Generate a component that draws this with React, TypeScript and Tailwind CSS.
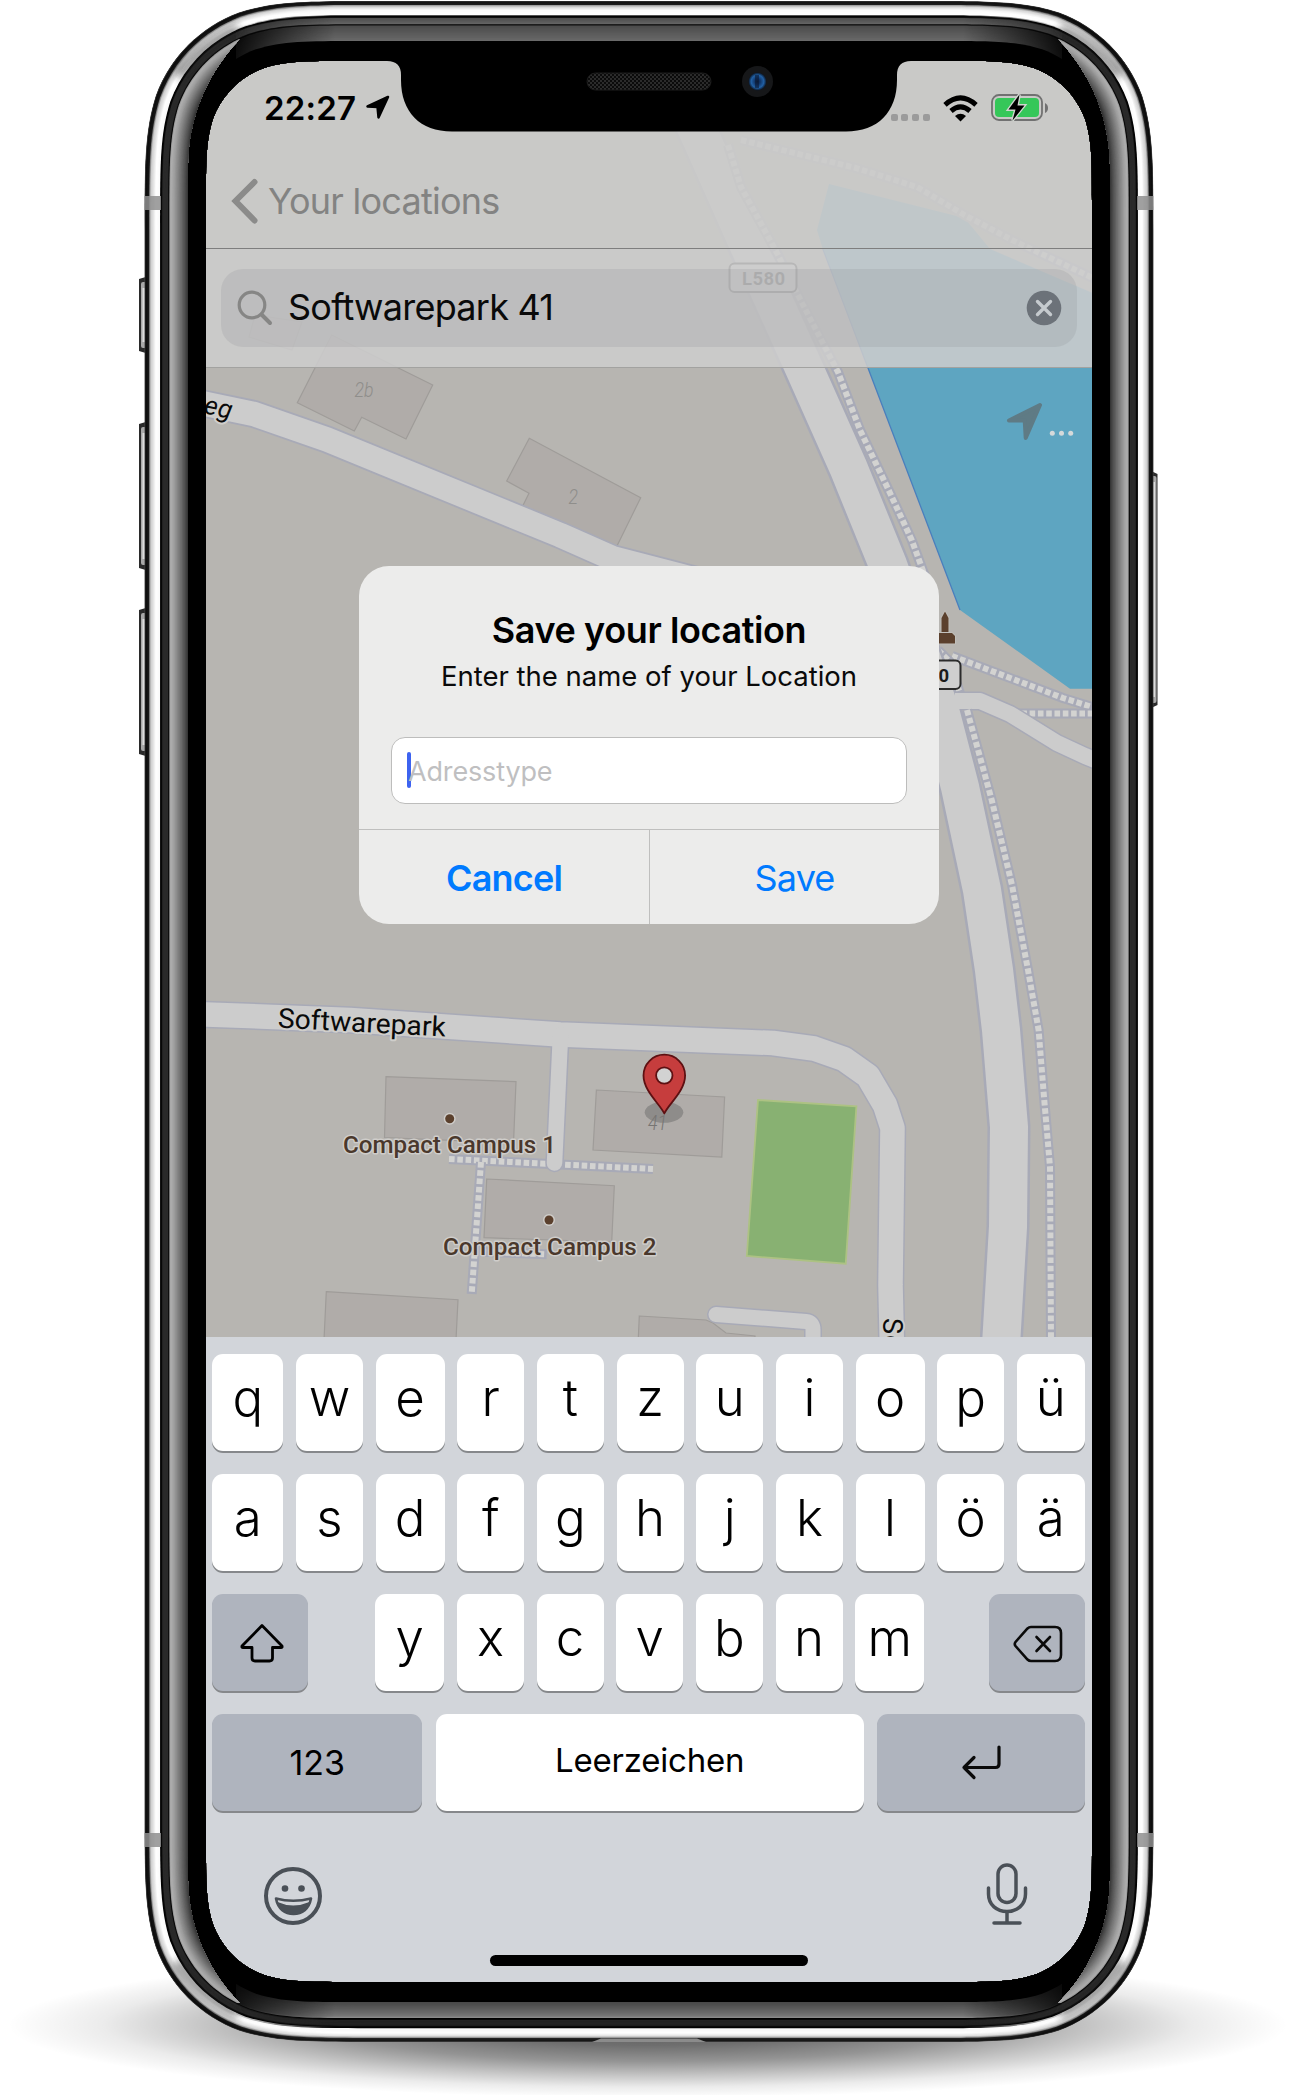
import React from "react";

/* ---------- geometry helpers for the device frame ---------- */

const OUT = { x0: 144.5, y0: 1, x1: 1153.5, y1: 2042 };

// Rounded rectangle with continuous-curvature corners.
function smoothRect(x0: number, y0: number, x1: number, y1: number, r: number): string {
  const a = 1.52866 * r, b = 1.08849 * r, c = 0.86841 * r, d = 0.63149 * r;
  const e = 0.37282 * r, f = 0.16906 * r, g = 0.07491 * r;
  return [
    `M${x0 + a},${y0} L${x1 - a},${y0}`,
    `C${x1 - b},${y0} ${x1 - c},${y0} ${x1 - d},${y0 + g}`,
    `C${x1 - e},${y0 + f} ${x1 - f},${y0 + e} ${x1 - g},${y0 + d}`,
    `C${x1},${y0 + c} ${x1},${y0 + b} ${x1},${y0 + a}`,
    `L${x1},${y1 - a}`,
    `C${x1},${y1 - b} ${x1},${y1 - c} ${x1 - g},${y1 - d}`,
    `C${x1 - f},${y1 - e} ${x1 - e},${y1 - f} ${x1 - d},${y1 - g}`,
    `C${x1 - c},${y1} ${x1 - b},${y1} ${x1 - a},${y1}`,
    `L${x0 + a},${y1}`,
    `C${x0 + b},${y1} ${x0 + c},${y1} ${x0 + d},${y1 - g}`,
    `C${x0 + e},${y1 - f} ${x0 + f},${y1 - e} ${x0 + g},${y1 - d}`,
    `C${x0},${y1 - c} ${x0},${y1 - b} ${x0},${y1 - a}`,
    `L${x0},${y0 + a}`,
    `C${x0},${y0 + b} ${x0},${y0 + c} ${x0 + g},${y0 + d}`,
    `C${x0 + f},${y0 + e} ${x0 + e},${y0 + f} ${x0 + d},${y0 + g}`,
    `C${x0 + c},${y0} ${x0 + b},${y0} ${x0 + a},${y0}Z`,
  ].join(" ");
}

const ring = (d: number) =>
  smoothRect(OUT.x0 + d, OUT.y0 + d * 0.976, OUT.x1 - d, OUT.y1 - d * 0.976, 150 - d * 0.94);

const SCREEN = smoothRect(206, 61, 1092, 1982, 92);

// [inset from the outer edge, grey level]
type Stop = [number, number];

const SIDE_BAND: Stop[] = [
  [0, 70], [1, 12], [4, 24], [4.6, 120], [6, 205], [9, 232], [11, 255], [15, 250],
  [15.6, 0], [17, 8], [18, 42], [23, 42], [24, 4], [24.8, 0],
];
const TOP_BAND: Stop[] = [
  [0, 50], [1, 20], [3.4, 30], [4, 150], [6, 215], [9, 250], [14, 255], [14.6, 60],
  [15.2, 0], [17, 20], [17.4, 78], [23, 100], [23.8, 10], [25, 30], [25.2, 0],
];
const BOTTOM_BAND: Stop[] = [
  [0, 60], [1, 20], [3.6, 40], [4.2, 150], [6, 225], [9, 255], [13.6, 245], [14.2, 0],
  [16, 10], [17, 34], [22, 34], [23, 0], [24.6, 0],
];
const SIDE_GLASS: Stop[] = [[24.8, 150], [26, 175], [29, 160], [35, 118], [40, 80], [44, 44]];
const TOP_GLASS: Stop[] = [[25.2, 76], [40, 104], [41, 110]];
const BOTTOM_GLASS: Stop[] = [[24.6, 140], [26, 120], [34, 92], [41, 70]];

function Bands({ stops }: { stops: Stop[] }) {
  const out: React.ReactNode[] = [];
  for (let i = 0; i < stops.length - 1; i++) {
    const [d0, c0] = stops[i];
    const [d1, c1] = stops[i + 1];
    const n = Math.max(1, Math.round((d1 - d0) / 0.6));
    for (let k = 0; k < n; k++) {
      const t = k / n;
      const v = Math.round(c0 + (c1 - c0) * t);
      out.push(<path key={`${i}-${k}`} d={ring(d0 + (d1 - d0) * t)} fill={`rgb(${v},${v},${v})`} />);
    }
  }
  const end = stops[stops.length - 1][0];
  return (
    <>
      {out}
      <path d={ring(end)} fill="#000" />
    </>
  );
}

function SideButton({ y, h, right }: { y: number; h: number; right?: boolean }) {
  const x = right ? 1149 : 139;
  return (
    <g>
      <path
        d={
          right
            ? `M1149 ${y}L1157.5 ${y + 4}V${y + h - 4}L1149 ${y + h}Z`
            : `M149 ${y}L139 ${y + 3}V${y + h - 3}L149 ${y + h}Z`
        }
        fill="#2a2a2a"
      />
      <rect x={x + 2} y={y + 6} width="5.5" height={h - 12} rx="2" fill="#a8a8a8" />
      <rect x={x + 3.5} y={y + 12} width="2.5" height={h - 24} fill="#dcdcdc" />
    </g>
  );
}

function DeviceFrame() {
  return (
    <svg className="pointer-events-none absolute inset-0" width="1296" height="2095" viewBox="0 0 1296 2095">
      <defs>
        <clipPath id="bezel">
          <path clipRule="evenodd" d={`${ring(0)} ${SCREEN}`} />
        </clipPath>
        <clipPath id="sides">
          <path d="M100 39H240C214 66 189 108 188 165V1880C189 1935 214 1978 240 2003H100Z" />
          <path d="M1198 39H1058C1084 66 1109 108 1110 165V1880C1109 1935 1084 1978 1058 2003H1198Z" />
        </clipPath>
        <linearGradient id="fadeX" gradientUnits="userSpaceOnUse" x1="236" y1="0" x2="1062" y2="0">
          <stop offset="0" stopColor="#222" />
          <stop offset="0.12" stopColor="#fff" />
          <stop offset="0.88" stopColor="#fff" />
          <stop offset="1" stopColor="#222" />
        </linearGradient>
        <mask id="topMask" maskUnits="userSpaceOnUse" x="0" y="0" width="1296" height="2095">
          <rect x="236" y="0" width="826" height="80" fill="url(#fadeX)" />
        </mask>
        <mask id="bottomMask" maskUnits="userSpaceOnUse" x="0" y="0" width="1296" height="2095">
          <rect x="236" y="1970" width="826" height="80" fill="url(#fadeX)" />
        </mask>
        <pattern id="mesh" width="4" height="4" patternUnits="userSpaceOnUse">
          <rect width="4" height="4" fill="#0b0b0b" />
          <rect width="2" height="2" fill="#2b2b2b" />
          <rect x="2" y="2" width="2" height="2" fill="#2b2b2b" />
        </pattern>
        <radialGradient id="lens">
          <stop offset="0" stopColor="#0c2140" />
          <stop offset="0.35" stopColor="#123a70" />
          <stop offset="0.7" stopColor="#2160a4" />
          <stop offset="1" stopColor="#0a1526" />
        </radialGradient>
        <filter id="soft" x="-50%" y="-50%" width="200%" height="200%">
          <feGaussianBlur stdDeviation="4" />
        </filter>
      </defs>

      <SideButton y={276} h={78} />
      <SideButton y={421} h={150} />
      <SideButton y={607} h={150} />
      <SideButton y={470} h={239} right />

      <g clipPath="url(#bezel)">
        <Bands stops={SIDE_BAND} />
        <g mask="url(#topMask)">
          <Bands stops={[...TOP_BAND, ...TOP_GLASS]} />
        </g>
        <g mask="url(#bottomMask)">
          <Bands stops={[...BOTTOM_BAND, ...BOTTOM_GLASS]} />
        </g>
        <g clipPath="url(#sides)">
          <Bands stops={[...SIDE_BAND, ...SIDE_GLASS]} />
        </g>
        {/* reflections on the steel band at the corners */}
        <g filter="url(#soft)" opacity="0.6" fill="none" stroke="#222" strokeWidth="8">
          <path d="M178 76Q202 44 238 29" />
          <path d="M1120 76Q1096 44 1060 29" />
          <path d="M176 1962Q200 1998 238 2014" />
          <path d="M1122 1962Q1098 1998 1060 2014" />
        </g>
        <g fill="#8f8f8f" opacity="0.85">
          <rect x="144" y="196" width="17" height="14" />
          <rect x="1137" y="196" width="17" height="14" />
          <rect x="144" y="1833" width="17" height="14" />
          <rect x="1137" y="1833" width="17" height="14" />
        </g>
      </g>

      <path
        d="M380 58V61H387Q401 61 401 75V80C401 112 420 131.500 452 131.500H846C878 131.500 897 112 897 80V75Q897 61 911 61H920V58Z"
        fill="#000"
      />
      <path d="M592 2042L601 2038.500H697L706 2042Z" fill="#8b8b8b" />
      <rect x="587" y="73" width="124" height="17" rx="8.500" fill="url(#mesh)" stroke="#1c1c1c" />
      <circle cx="757.500" cy="81.500" r="15.500" fill="#161719" />
      <circle cx="757.500" cy="81.500" r="9" fill="url(#lens)" />
      <rect x="755" y="75" width="4" height="13" fill="#0b1830" opacity="0.6" />
    </svg>
  );
}

/* ---------- map ---------- */

const CASING = "#a8aab7";
const ROAD = "#cccccc";

function Road({ d, w, cap = "butt" }: { d: string; w: number; cap?: "butt" | "round" }) {
  return <path d={d} fill="none" stroke={ROAD} strokeWidth={w} strokeLinejoin="round" strokeLinecap={cap} />;
}
function RoadCasing({ d, w, cap = "butt" }: { d: string; w: number; cap?: "butt" | "round" }) {
  return <path d={d} fill="none" stroke={CASING} strokeWidth={w} strokeLinejoin="round" strokeLinecap={cap} />;
}
function FootPath({ d, w = 6 }: { d: string; w?: number }) {
  return (
    <g fill="none" strokeLinejoin="round">
      <path d={d} stroke={CASING} strokeWidth={w + 4} />
      <path d={d} stroke="#d3d3d1" strokeWidth={w} strokeDasharray="5.600 2.700" />
    </g>
  );
}

const WEG = "M196 402L254 414L327 439.500L560 535L612 558L720 586";
const PARK =
  "M196 1014L350 1020L560 1034.500L773 1043L814 1048.500L844 1059L868 1076L885 1105L892.500 1128L890.500 1285L892 1350";
const LANE = "M560.500 1035L554.500 1163";
const STUB = "M716 1314.500L806 1321.500Q813 1322 813 1330V1350";
const MAIN =
  "M672 75L702 140L750 248L804 368L848 466.700L888 565L940 710L960 787L982 890L994 970L1001 1030L1009 1127L1008 1227L1001 1345";
const SHORE = "M955 701L980 701L1010 714L1057 743L1085 756L1100 762";

function Shield({ x, y, stroke = "#2b2b2b" }: { x: number; y: number; stroke?: string }) {
  return (
    <g>
      <rect x={x} y={y} width="67" height="28.500" rx="5" fill="#cfcfcf" stroke={stroke} strokeWidth="2" />
      <text x={x + 12.500} y={y + 21.500} fontFamily="Roboto" fontWeight="700" fontSize="18.500" textLength="43" fill="#1b1b1b">
        L580
      </text>
    </g>
  );
}

function MapView() {
  const building = { fill: "#b0aca9", stroke: "#9f9c99", strokeWidth: 1.2 };
  return (
    <svg className="absolute left-0 top-0" width="886" height="1276" viewBox="206 61 886 1276" fontFamily="Roboto">
      <rect x="206" y="61" width="886" height="1276" fill="#b7b5b1" />
      <g {...building}>
        <path d="M297.300 402.700L354.300 431L361.700 417.300L406 439L432.700 385L331.700 335Z" />
        <path d="M255 315L249 337L292 350L302 322Z" />
        <path d="M529.300 438.300L506.700 481L529 493.300L522.700 506L615 550L640.700 497.700Z" />
        <path d="M386 1076.700L516 1081.700L513.500 1143L384.500 1137.500Z" />
        <path d="M596.400 1090L724.600 1097L721.800 1157L593 1150Z" />
        <path d="M486.700 1179L614.300 1185.700L611.700 1242L484 1237.700Z" />
        <path d="M326.300 1291.700L458 1299.700L456 1340L324 1340Z" />
        <path d="M639.300 1316L706 1320L713 1323L726 1333L755 1336V1345H638Z" />
      </g>
      <path d="M758 1100L856.400 1106.300L845.700 1263.700L746.800 1256Z" fill="#88b172" stroke="#adc283" strokeWidth="1.800" />
      <path
        d="M829 184L964.500 218L990 249L1095 294V688.700H1070L960 610L868 368L822.500 248L817 230Z"
        fill="#5ea5c1"
      />
      <path d="M822.500 248L868 368L960 610" fill="none" stroke="#4a7fbd" strokeWidth="1.300" />

      <FootPath d="M480.500 1251.700L546.700 1254.300" />
      <FootPath d="M449 1159L653 1169" />
      <FootPath d="M481 1162L471.700 1294" />
      <FootPath d="M741 140L856 168L917 187L964.500 215L1012 240L1095 279" />
      <FootPath d="M952 656L1063 698L1095 708" />
      <FootPath d="M1013 713.500H1095" />
      <FootPath d="M938 650L950 662L962 700" />

      <RoadCasing d={WEG} w={28} />
      <RoadCasing d={MAIN} w={43} />
      <RoadCasing d={PARK} w={27.5} />
      <RoadCasing d={LANE} w={18.5} cap="round" />
      <RoadCasing d={STUB} w={18} cap="round" />
      <RoadCasing d={SHORE} w={19} />
      <Road d={WEG} w={24.5} />
      <Road d={MAIN} w={38} />
      <Road d={PARK} w={24.5} />
      <Road d={LANE} w={15.5} cap="round" />
      <Road d={STUB} w={15} cap="round" />
      <Road d={SHORE} w={16} />
      <FootPath d="M728 145L741 187L777 253L802 303L838 372L860 430L890 493L911.700 540L930 590" />
      <FootPath d="M967 710L980 757L991.700 800L1012 885L1028 970L1038.600 1030L1044 1097L1050 1167L1051 1340" />

      <Shield x={729.500} y={263.500} />
      <Shield x={893.500} y={660.500} />

      <g fill="#5b402d" stroke="#c4c2be" strokeWidth="1.500" paintOrder="stroke">
        <path d="M945 611.500L948.500 618V632H941.500V618Z" />
        <path d="M936 633H952L955 636V643.500H933V636Z" />
      </g>

      <g fontStyle="italic" fill="#8f8e8b" fontSize="20" fontWeight="300">
        <text x="354.500" y="396.500" textLength="19" lengthAdjust="spacingAndGlyphs">2b</text>
        <text x="568.500" y="504" textLength="9.500" lengthAdjust="spacingAndGlyphs">2</text>
      </g>

      <g stroke="#cfcecb" strokeWidth="4" paintOrder="stroke" strokeLinejoin="round" fill="#0a0a0a">
        <text transform="translate(203 413) rotate(12)" fontSize="26" textLength="28" fontStyle="italic">eg</text>
        <text transform="translate(277.500 1027.500) rotate(3.100)" fontSize="27.500" textLength="168" lengthAdjust="spacingAndGlyphs">Softwarepark</text>
        <text transform="translate(883 1318) rotate(90)" fontSize="27" letterSpacing="1">So</text>
      </g>
      <g stroke="#cfcdca" strokeWidth="3" paintOrder="stroke" strokeLinejoin="round" fill="#4a382c" fontSize="24.500" fontWeight="500">
        <circle cx="449.700" cy="1118.700" r="4.500" fill="#5b402d" />
        <circle cx="549" cy="1220" r="4.500" fill="#5b402d" />
        <text x="343" y="1153.300" textLength="213" lengthAdjust="spacingAndGlyphs">Compact Campus 1</text>
        <text x="443" y="1254.500" textLength="213.500" lengthAdjust="spacingAndGlyphs">Compact Campus 2</text>
      </g>

      <ellipse cx="664" cy="1112.300" rx="19.300" ry="10.500" fill="#8e8c8a" />
      <text x="648" y="1130" fontStyle="italic" fontSize="20" fontWeight="300" fill="#777573" textLength="19" lengthAdjust="spacingAndGlyphs">41</text>
      <path
        d="M664.300 1113.500C660 1104 643.500 1091 643.500 1075.500A20.800 20.800 0 0 1 685.100 1075.500C685.100 1091 668.500 1104 664.300 1113.500Z"
        fill="#c63d3d"
        stroke="#5e1012"
        strokeWidth="1.800"
        strokeLinejoin="round"
      />
      <circle cx="664.300" cy="1075.500" r="8.200" fill="#d2d2d2" stroke="#5e1012" strokeWidth="1.800" />

      <path
        d="M1040 405L1009 420.500H1024.700L1025.700 438Z"
        fill="#5f7b85"
        stroke="#5f7b85"
        strokeWidth="4"
        strokeLinejoin="round"
      />
      <g fill="#d5d9da">
        <circle cx="1052.300" cy="433.300" r="2.500" />
        <circle cx="1061.500" cy="433.300" r="2.500" />
        <circle cx="1070.700" cy="433.300" r="2.500" />
      </g>
    </svg>
  );
}

/* ---------- bars ---------- */

function StatusBar() {
  return (
    <div className="flex h-[92px] items-start justify-between pl-[58px] pr-[43px] pt-[27px]">
      <div className="flex items-center gap-[10px]">
        <span className="w-[91px] whitespace-nowrap text-[33px] font-semibold leading-[40px] tracking-[0.200px] text-black">22:27</span>
        <svg width="25" height="25" viewBox="0 0 25 25" className="mt-[-1px]">
          <path d="M23 2L2.500 11.500L12.500 12L13.500 22.500Z" fill="#000" stroke="#000" strokeWidth="2.500" strokeLinejoin="round" />
        </svg>
      </div>
      <div className="mt-[5px] flex items-end gap-[13px]">
        <div className="mb-[1px] flex gap-[3.800px]">
          {[0, 1, 2, 3].map((i) => (
            <div key={i} className="h-[7px] w-[7px] rounded-[2px] bg-[#9b9b9b]" />
          ))}
        </div>
        <svg width="35" height="27" viewBox="0 0 35 27">
          <g fill="none" stroke="#000" strokeWidth="5">
            <path d="M2 9.800Q17.500 -4 33 9.800" />
            <path d="M8 16Q17.500 7.800 27 16" />
          </g>
          <path d="M17.500 26.500L12 21Q17.500 16.500 23 21Z" />
        </svg>
        <svg width="58" height="30" viewBox="0 0 58 30" className="mb-[-1px]">
          <rect x="1" y="2" width="50" height="25" rx="7" fill="none" stroke="#717171" strokeWidth="1.800" />
          <rect x="4" y="5" width="44" height="19" rx="4" fill="#35c759" />
          <path d="M54 10V20Q57 18.500 57 15T54 10Z" fill="#717171" />
          <path d="M28.500 1.500L17.500 16.500H24.500L21.500 27.500L33.500 12.500H26.500Z" fill="#000" stroke="#cfd6cf" strokeWidth="2.800" paintOrder="stroke" />
        </svg>
      </div>
    </div>
  );
}

function Header() {
  return (
    <header className="relative h-[188px] border-b-[1.500px] border-[#7e7e7e] bg-[rgba(203,203,202,0.9)]">
      <StatusBar />
      <div className="flex h-[95px] items-center pl-[25px]">
        <svg width="28" height="48" viewBox="0 0 28 48">
          <path d="M23.500 5L4.500 24L23.500 43.500" fill="none" stroke="#8b8b8a" strokeWidth="6" strokeLinecap="round" strokeLinejoin="miter" />
        </svg>
        <span className="ml-[9px] whitespace-nowrap text-[36px] leading-[44px] tracking-[-0.750px] text-[#838382]">Your locations</span>
      </div>
    </header>
  );
}

function SearchBar() {
  return (
    <div className="relative h-[119px] border-b-[1.500px] border-[#a2a2a0] bg-[rgba(204,204,204,0.87)] px-[15px] pt-[20px]">
      <div className="flex h-[78px] items-center rounded-[22px] bg-[rgba(110,110,115,0.13)] pl-[16px] pr-[15px]">
        <svg width="36" height="36" viewBox="0 0 36 36" className="mt-[-1px]">
          <circle cx="15" cy="15" r="12.800" fill="none" stroke="#868685" strokeWidth="3.200" />
          <path d="M24.500 24.500L33 33" stroke="#868685" strokeWidth="4" strokeLinecap="round" />
        </svg>
        <span className="ml-[15px] mt-[-2px] whitespace-nowrap text-[36px] leading-[44px] tracking-[-0.750px] text-[#0a0a0a]">Softwarepark 41</span>
        <svg width="36" height="36" viewBox="0 0 36 36" className="ml-auto">
          <circle cx="18" cy="18" r="17.300" fill="#6c7279" />
          <path d="M11.500 11.500L24.500 24.500M24.500 11.500L11.500 24.500" stroke="#c5cace" strokeWidth="3.400" strokeLinecap="round" />
        </svg>
      </div>
    </div>
  );
}

/* ---------- dialog ---------- */

function SaveDialog() {
  return (
    <div className="absolute left-[153px] top-[504.500px] flex h-[358px] w-[580px] flex-col overflow-hidden rounded-[30px] bg-[#ececeb] pt-[44px]">
      <h1 className="whitespace-nowrap text-center text-[36px] font-semibold leading-[40px] tracking-[-0.400px] text-black">Save your location</h1>
      <p className="mt-[8px] whitespace-nowrap text-center text-[27.500px] leading-[36px] text-[#0a0a0a]">Enter the name of your Location</p>
      <div className="mx-[32px] mt-[43px] flex h-[67px] items-center rounded-[14px] border-[1.500px] border-[#bdbdbc] bg-white pl-[15px]">
        <div className="h-[36px] w-[4px] rounded-[2px] bg-[#3d63f0]" />
        <span className="ml-[-3px] mt-[3px] text-[27px] leading-[36px] tracking-[-0.150px] text-[#bfbfc1]">Adresstype</span>
      </div>
      <div className="mt-[25px] grid flex-1 grid-cols-[291px_1fr] border-t-[1.500px] border-[#bfbfbe] text-[36px] text-[#007aff]">
        <button className="border-r-[1.500px] border-[#bfbfbe] pt-[3px] font-semibold tracking-[-0.800px]">Cancel</button>
        <button className="pt-[3px] tracking-[-0.850px]">Save</button>
      </div>
    </div>
  );
}

/* ---------- keyboard ---------- */

const KEY = "h-[97px] rounded-[11px] bg-white shadow-[0_2px_0_#86888b]";
const LETTER = `${KEY} text-center text-[51px] font-[350] leading-[87px] text-black`;
const DARK = "h-[97px] rounded-[11px] bg-[#afb4be] shadow-[0_2px_0_#86888b] flex items-center justify-center";

const WIDTHS = ["w-[71px]", "w-[67px]", "w-[69px]", "w-[67px]", "w-[67px]", "w-[67px]", "w-[67px]", "w-[67px]", "w-[69px]", "w-[67px]", "w-[68px]"];

function KeyRow({ letters }: { letters: string }) {
  return (
    <div className="flex justify-between">
      {[...letters].map((ch, i) => (
        <div key={ch} className={`${LETTER} ${WIDTHS[i]}`}>{ch}</div>
      ))}
    </div>
  );
}

function Keyboard() {
  return (
    <div className="relative h-[645px] bg-[#d2d5da] pl-[6.300px] pr-[7px] pt-[17px]">
      <div className="flex flex-col gap-[23px]">
        <KeyRow letters="qwertzuiopü" />
        <KeyRow letters="asdfghjklöä" />
        <div className="flex">
          <div className={`${DARK} w-[96px]`}>
            <svg width="46" height="42" viewBox="0 0 46 42" className="ml-[3px] mt-[1px]">
              <path
                d="M23 3.500L43 24Q43.500 25.500 42 25.500H33.500V36Q33.500 39 30.500 39H16Q13 39 13 36V25.500H4Q2.500 25.500 3 24Z"
                fill="none" stroke="#000" strokeWidth="2.800" strokeLinejoin="round"
              />
            </svg>
          </div>
          <div className="ml-[67px] flex w-[549px] justify-between">
            {[..."yxcvbnm"].map((ch, i) => (
              <div key={ch} className={`${LETTER} ${WIDTHS[i + 2]}`}>{ch}</div>
            ))}
          </div>
          <div className={`${DARK} ml-auto w-[96px]`}>
            <svg width="52" height="40" viewBox="0 0 52 40" className="ml-[1px] mt-[2px]">
              <path
                d="M19 3H43Q49 3 49 9V31Q49 37 43 37H19Q17 37 15.500 35.500L3.500 22Q2 20 3.500 18L15.500 4.500Q17 3 19 3Z"
                fill="none" stroke="#0a0a0a" strokeWidth="2.600"
              />
              <path d="M24.500 13L38 27M38 13L24.500 27" stroke="#0a0a0a" strokeWidth="2.600" strokeLinecap="round" />
            </svg>
          </div>
        </div>
        <div className="flex justify-between">
          <div className={`${DARK} w-[210px] text-[34px] text-black`}>123</div>
          <div className={`${KEY} w-[428px] text-center text-[33px] leading-[92px] tracking-[-0.200px] text-black`}>Leerzeichen</div>
          <div className={`${DARK} w-[208px]`}>
            <svg width="42" height="36" viewBox="0 0 42 36" className="mt-[-2px]">
              <path d="M39 3V20Q39 23.500 35.500 23.500H4M14 13.500L4 23.500L14 33.500" fill="none" stroke="#0a0a0a" strokeWidth="3.200" strokeLinecap="round" strokeLinejoin="round" />
            </svg>
          </div>
        </div>
      </div>
      <div className="mt-[51px] flex items-center justify-between pl-[50.500px] pr-[56px]">
        <svg width="60" height="60" viewBox="0 0 60 60" className="mt-[4px]">
          <circle cx="30" cy="30" r="27" fill="none" stroke="#4a5057" strokeWidth="4" />
          <circle cx="22" cy="22.500" r="3.300" fill="#4a5057" />
          <circle cx="38.500" cy="22.500" r="3.300" fill="#4a5057" />
          <path d="M13 32.500Q30 37 48 32.500C46 43 39 48 30.500 48S15 43 13 32.500Z" fill="none" stroke="#4a5057" strokeWidth="2.600" strokeLinejoin="round" />
          <path d="M14.500 36Q30 43 46.500 36C44 44 38 48 30.500 48S17 44 14.500 36Z" fill="#4a5057" />
        </svg>
        <svg width="44" height="64" viewBox="0 0 44 64">
          <g fill="none" stroke="#4a5057" strokeWidth="3.500" strokeLinecap="round">
            <rect x="13" y="3" width="18" height="37.500" rx="9" />
            <path d="M3.500 26V32C3.500 43 12 49.500 22 49.500S40.500 43 40.500 32V26" />
            <path d="M22 50V61M9 61H35" />
          </g>
        </svg>
      </div>
      <div className="absolute left-[284px] top-[618px] h-[11px] w-[318px] rounded-full bg-black" />
    </div>
  );
}

export default function App() {
  return (
    <div className="relative h-[2095px] w-[1296px] overflow-hidden bg-white font-['Inter','Liberation_Sans',sans-serif]">
      <div className="absolute left-[8px] top-[1952px] h-[146px] w-[1280px] bg-[radial-gradient(closest-side,rgba(0,0,0,0.64)_0%,rgba(0,0,0,0.57)_28%,rgba(0,0,0,0.42)_50%,rgba(0,0,0,0.22)_70%,rgba(0,0,0,0.08)_85%,rgba(0,0,0,0)_100%)]" />
      <div className="pt-[61px] pl-[206px]">
        <main className="relative flex h-[1921px] w-[886px] flex-col overflow-hidden rounded-[80px]">
          <MapView />
          <Header />
          <SearchBar />
          <div className="h-[969px]" />
          <Keyboard />
          <SaveDialog />
        </main>
      </div>
      <DeviceFrame />
    </div>
  );
}
